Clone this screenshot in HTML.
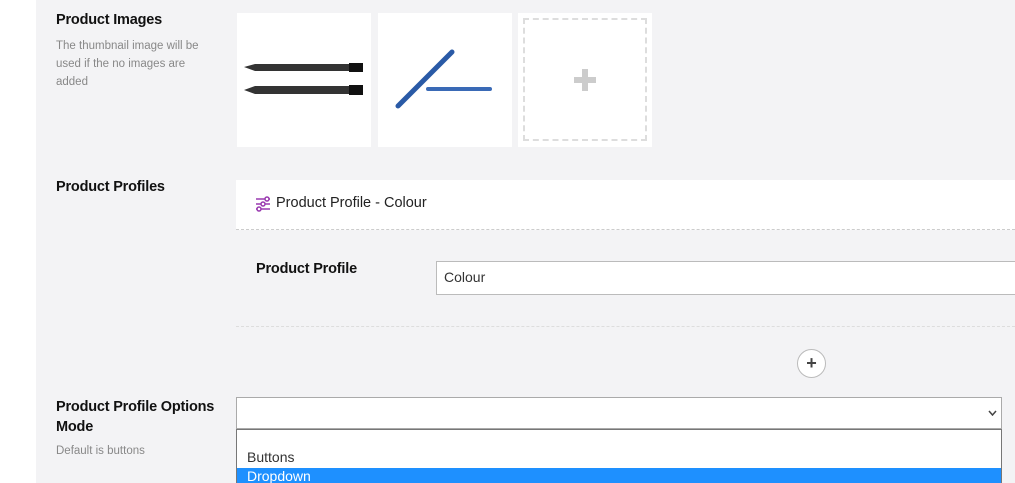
<!DOCTYPE html>
<html><head><meta charset="utf-8"><style>
*{margin:0;padding:0;box-sizing:border-box}
html,body{width:1015px;height:483px;overflow:hidden}
body{background:#fff;font-family:"Liberation Sans",sans-serif;position:relative}
.bg{position:absolute;left:36px;top:0;right:0;bottom:0;background:#f3f3f5}
.a{position:absolute}
.lbl{font-weight:bold;font-size:14.5px;color:#111;letter-spacing:-0.2px}
.sub{font-size:11.5px;color:#888;line-height:18px}
.box{background:#fff}
</style></head><body>
<div class="bg"></div>
<div class="a lbl" style="left:56px;top:12px">Product Images</div>
<div class="a sub" style="left:56px;top:37px;width:160px">The thumbnail image will be used if the no images are added</div>

<div class="a box" style="left:237px;top:13px;width:134px;height:134px">
<svg width="134" height="134">
<path d="M7 54 L18 51 L126 51 L126 58 L18 58 Z" fill="#333"/>
<path d="M7 77 L18 73 L126 73 L126 81 L18 81 Z" fill="#333"/>
<rect x="112" y="50" width="14" height="9" fill="#111"/>
<rect x="112" y="72" width="14" height="10" fill="#111"/>
</svg></div>
<div class="a box" style="left:378px;top:13px;width:134px;height:134px">
<svg width="134" height="134">
<path d="M20 93 L74 39" stroke="#2a5aa6" stroke-width="5" stroke-linecap="round"/>
<path d="M50 76 L112 76" stroke="#3a6ab6" stroke-width="4" stroke-linecap="round"/>
</svg></div>
<div class="a box" style="left:518px;top:13px;width:134px;height:134px">
<div class="a" style="left:5px;top:5px;width:124px;height:123px;border:2px dashed #ddd"></div>
<div class="a" style="left:56px;top:64px;width:22px;height:6px;background:#ccc"></div>
<div class="a" style="left:64px;top:56px;width:6px;height:22px;background:#ccc"></div>
</div>

<div class="a lbl" style="left:56px;top:179px">Product Profiles</div>
<div class="a box" style="left:236px;top:180px;width:779px;height:50px;border-bottom:1px dashed #ccc">
<svg class="a" style="left:19px;top:16px" width="16" height="16" fill="none" stroke="#9a3ab0" stroke-width="1.5">
<path d="M1 3H15M1 8H15M1 13H15"/><circle cx="12" cy="3" r="2" fill="#fff"/><circle cx="8" cy="8" r="2" fill="#fff"/><circle cx="4" cy="13" r="2" fill="#fff"/></svg>
<div class="a" style="left:40px;top:15px;font-size:14.5px;color:#222">Product Profile - Colour</div>
</div>
<div class="a lbl" style="left:256px;top:261px">Product Profile</div>
<div class="a box" style="left:436px;top:261px;width:590px;height:34px;border:1px solid #bbb;font-size:14px;color:#333;padding:7px 7px">Colour</div>
<div class="a" style="left:236px;top:326px;width:779px;border-top:1px dashed #ddd"></div>
<div class="a box" style="left:797px;top:349px;width:29px;height:29px;border:1px solid #bbb;border-radius:50%;font-size:18px;font-weight:bold;color:#444;text-align:center;line-height:26px">+</div>

<div class="a lbl" style="left:56px;top:397px;line-height:20px;width:170px">Product Profile Options Mode</div>
<div class="a sub" style="left:56px;top:442px">Default is buttons</div>
<div class="a box" style="left:236px;top:397px;width:766px;height:32px;border:1px solid #aaa">
<svg class="a" style="left:751px;top:12px" width="9" height="6" fill="none" stroke="#444" stroke-width="1.5"><path d="M1 1L4.5 5L8 1"/></svg></div>
<div class="a box" style="left:236px;top:429px;width:766px;height:54px;border:1px solid #777;border-bottom:none;overflow:hidden">
<div class="a" style="left:10px;top:19px;font-size:14px;color:#333">Buttons</div>
<div class="a" style="left:0;top:38px;width:764px;height:20px;background:#1e90ff;color:#fff;font-size:14px;padding-left:10px;line-height:17px">Dropdown</div>
</div>
</body></html>
